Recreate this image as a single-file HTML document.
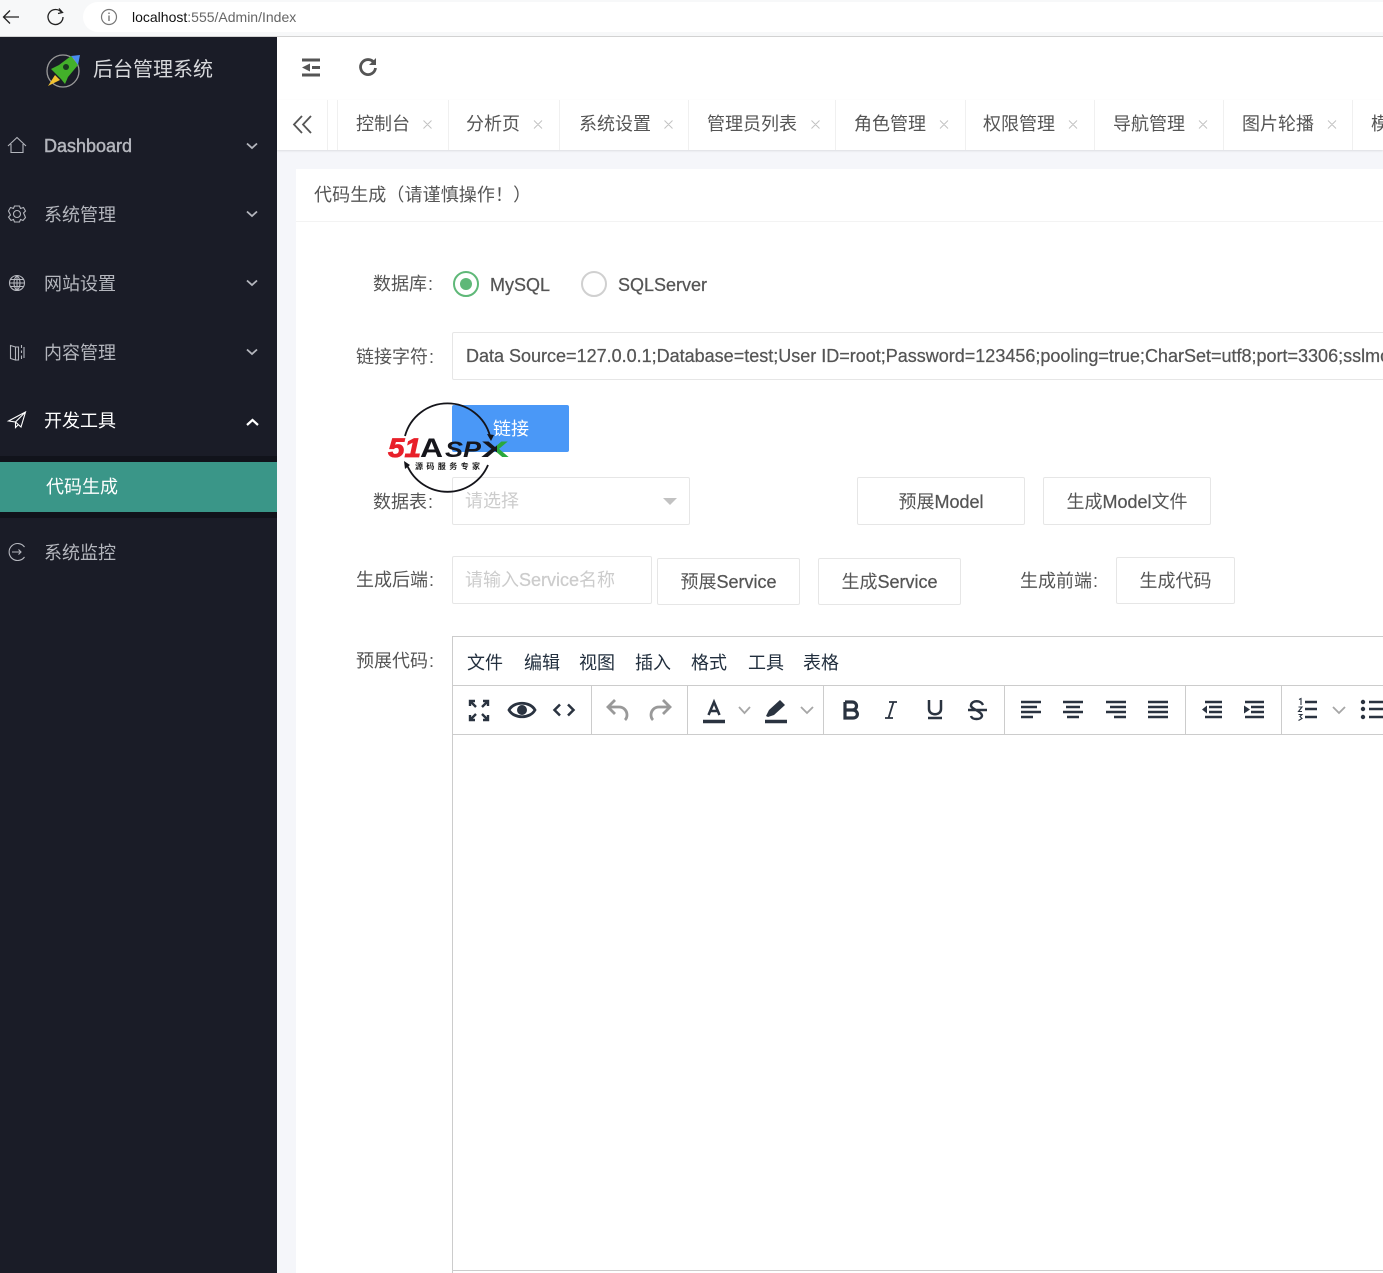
<!DOCTYPE html>
<html lang="zh"><head><meta charset="utf-8"><title>后台管理系统</title>
<style>
*{box-sizing:border-box}
html{overflow:hidden;height:1273px}
html,body{margin:0;padding:0}
body{width:1383px;height:1273px;position:relative;overflow:hidden;background:#f5f6fa;font-family:"Liberation Sans","Noto Sans CJK SC",sans-serif;color:#555;font-size:18px}
.a,.t,.b{position:absolute}
.t{white-space:nowrap;line-height:24px}
.b{background:#fff;border:1px solid #e6e6e6;border-radius:2px;text-align:center;white-space:nowrap;color:#555;font-size:18px}
.s{color:#b4b6bd}
.l{-webkit-text-stroke:.25px currentColor}
.c{margin-left:1px}
svg{position:absolute;overflow:visible;fill:none}
.sep{position:absolute;top:686px;width:1px;height:48px;background:#ccc}
</style></head><body>

<!-- browser bar -->
<div class="a" style="left:0;top:0;width:1383px;height:37px;background:#f7f8f9;border-bottom:1px solid #d2d2d2"></div>
<div class="a" style="left:83px;top:2px;width:1300px;height:30px;background:#fff;border-radius:15px 0 0 15px"></div>
<svg style="left:0;top:0" width="120" height="36"><path d="M19 17H4M10 10.500L3.500 17L10 23.500" stroke="#222" stroke-width="1.300"/><path d="M61.500 12.500A7.500 7.500 0 1 0 63 17" stroke="#222" stroke-width="1.300"/><path d="M59 8.500L62.500 12.500L58 13.500" stroke="#222" stroke-width="1.300"/><circle cx="109" cy="17" r="7.500" stroke="#777" stroke-width="1.200"/><path d="M109 15.500V21M109 12.500V14" stroke="#777" stroke-width="1.400"/></svg>
<div class="t" style="left:132px;top:5px;font-size:14px;color:#666"><span style="color:#111">localhost</span>:555/Admin/Index</div>

<!-- sidebar -->
<div class="a" style="left:0;top:37px;width:277px;height:1236px;background:#1a1c27"></div>
<svg style="left:46px;top:53px" width="36" height="36"><circle cx="17" cy="18" r="16" stroke="#9a9a9a" stroke-width="1.300"/><path d="M25 3L13 12L5 16L9 20L15 26L19 31L22 24L32 12Z" fill="#43b02a"/><path d="M34 2L25 3L28 6L30 9L32 12Z" fill="#4a8cf0"/><circle cx="20" cy="14" r="3" fill="#1a3a20"/><path d="M9 22L2 33L14 27Z" fill="#f2c230"/></svg>
<div class="t" style="left:93px;top:58px;font-size:20px;color:#d8d9dc">后台管理系统</div>

<div class="t s" style="left:44px;top:134px;-webkit-text-stroke:.45px #b4b6bd">Dashboard</div>
<div class="t s" style="left:44px;top:203px">系统管理</div>
<div class="t s" style="left:44px;top:272px">网站设置</div>
<div class="t s" style="left:44px;top:341px">内容管理</div>
<div class="t" style="left:44px;top:409px;color:#fff">开发工具</div>
<div class="a" style="left:0;top:456px;width:277px;height:62px;background:#11131b"></div>
<div class="a" style="left:0;top:462px;width:277px;height:50px;background:#3a9688"></div>
<div class="t" style="left:46px;top:475px;color:#fff">代码生成</div>
<div class="t s" style="left:44px;top:541px">系统监控</div>

<svg style="left:0;top:130px" width="277" height="440" stroke="#b4b6bd" stroke-width="1.100">
<path d="M8 16L17 7.500L26 16M11 14V22.500H23V14"/>
<path d="M247 13.500L252 18L257 13.500" stroke-width="1.800"/>
<circle cx="17" cy="84" r="3.500"/><path d="M14.500 76L19.500 76L20.500 78.500L23.500 77.500L25.500 81L23.500 83L24.500 85L25.500 87.500L23 90.500L20.500 89.500L19.500 92H14.500L13.500 89.500L11 90.500L8.500 87L10.500 85L8.500 81L10.500 77.500L13.500 78.500Z"/>
<path d="M247 81.500L252 86L257 81.500" stroke-width="1.800"/>
<circle cx="17" cy="153" r="7.500"/><path d="M9.500 153H24.500M10.500 149.500H23.500M10.500 156.500H23.500M17 145.500V160.500M17 145.500C13 149 13 157 17 160.500M17 145.500C21 149 21 157 17 160.500"/>
<path d="M247 150.500L252 155L257 150.500" stroke-width="1.800"/>
<path d="M10.500 215.500L15.500 217V230L10.500 228.500ZM15.500 217H18.500V230H15.500M21.500 215V218M21.500 220.500V223M21.500 225.500V229M24 217V228"/>
<path d="M247 219.500L252 224L257 219.500" stroke-width="1.800"/>
<path d="M8.500 291L25.500 282L21 297L15.500 292ZM25.500 282L15.500 292L15.500 297.500L18 295" stroke="#fff"/>
<path d="M247 295L252.500 290L258 295" stroke="#fff" stroke-width="2.200"/>
<path d="M24.500 417A8.500 8.500 0 1 0 24.500 427M12 422H21M18.500 419.500L21 422L18.500 424.500"/>
</svg>

<!-- header -->
<div class="a" style="left:277px;top:37px;width:1106px;height:63px;background:#fff"></div>
<svg style="left:277px;top:37px" width="120" height="63" stroke="#555"><path d="M25 23H43M35 30.500H43M25 38H43" stroke-width="3"/><path d="M33 26.500L25 30.500L33 34.500Z" fill="#555" stroke="none"/><path d="M97 25.500A7.500 7.500 0 1 0 98.500 31" stroke-width="2.800"/><path d="M99 21V28H92Z" fill="#555" stroke="none"/></svg>

<!-- tab bar -->
<div class="a" style="left:277px;top:100px;width:1106px;height:50px;background:#fff;box-shadow:0 1px 2px rgba(0,0,0,.1)"></div>
<svg style="left:277px;top:100px" width="1106" height="50" stroke="#f0f0f0"><path d="M50.500 0V50M60.500 0V50M171.500 0V50M282.500 0V50M411.500 0V50M558.500 0V50M688.500 0V50M817.500 0V50M946.500 0V50M1075.500 0V50"/><path d="M25 16L17 24.500L25 33M34 16L26 24.500L34 33" stroke="#555" stroke-width="1.800"/></svg>
<svg style="left:0;top:0" width="1383" height="150" stroke="#c2c2c2" stroke-width="1"><path d="M423.500 120.500L431.500 128.500M431.500 120.500L423.500 128.500M534 120.500L542 128.500M542 120.500L534 128.500M664.500 120.500L672.500 128.500M672.500 120.500L664.500 128.500M811.500 120.500L819.500 128.500M819.500 120.500L811.500 128.500M940 120.500L948 128.500M948 120.500L940 128.500M1069 120.500L1077 128.500M1077 120.500L1069 128.500M1199 120.500L1207 128.500M1207 120.500L1199 128.500M1328 120.500L1336 128.500M1336 120.500L1328 128.500"/></svg>
<div class="t" style="left:356px;top:112px">控制台</div>
<div class="t" style="left:466px;top:112px">分析页</div>
<div class="t" style="left:579px;top:112px">系统设置</div>
<div class="t" style="left:707px;top:112px">管理员列表</div>
<div class="t" style="left:854px;top:112px">角色管理</div>
<div class="t" style="left:983px;top:112px">权限管理</div>
<div class="t" style="left:1113px;top:112px">导航管理</div>
<div class="t" style="left:1242px;top:112px">图片轮播</div>
<div class="t" style="left:1371px;top:112px">模</div>

<!-- card -->
<div class="a" style="left:296px;top:169px;width:1087px;height:1104px;background:#fff"></div>
<div class="a" style="left:296px;top:221px;width:1087px;height:1px;background:#f3f3f3"></div>
<div class="t" style="left:314px;top:183px;letter-spacing:.1px">代码生成（请谨慎操作！）</div>

<div class="t" style="left:373px;top:272px">数据库<span class="c">:</span></div>
<div class="a" style="left:453px;top:271px;width:26px;height:26px;border:2px solid #5fb878;border-radius:50%"></div>
<div class="a" style="left:460px;top:278px;width:12px;height:12px;background:#5fb878;border-radius:50%"></div>
<div class="t l" style="left:490px;top:273px">MySQL</div>
<div class="a" style="left:581px;top:271px;width:26px;height:26px;border:2px solid #d0d0d0;border-radius:50%"></div>
<div class="t l" style="left:618px;top:273px">SQLServer</div>

<div class="t" style="left:356px;top:345px">链接字符<span class="c">:</span></div>
<div class="a" style="left:452px;top:332px;width:940px;height:48px;background:#fff;border:1px solid #e6e6e6;border-radius:2px"></div>
<div class="t l" style="left:466px;top:344px;width:917px;overflow:hidden">Data Source=127.0.0.1;Database=test;User ID=root;Password=123456;pooling=true;CharSet=utf8;port=3306;sslmode=none</div>

<div class="a" style="left:452px;top:405px;width:117px;height:47px;background:#4a98f7;border-radius:2px"></div>
<div class="t" style="left:493px;top:417px;color:#fff">链接</div>

<div class="t" style="left:373px;top:490px">数据表<span class="c">:</span></div>
<div class="a" style="left:452px;top:477px;width:238px;height:48px;background:#fff;border:1px solid #e6e6e6;border-radius:2px"></div>
<div class="t" style="left:465px;top:489px;color:#ccc">请选择</div>
<div class="a" style="left:663px;top:498px;width:0;height:0;border:7px solid transparent;border-top:7px solid #c2c2c2;border-bottom:0"></div>
<div class="b" style="left:857px;top:477px;width:168px;height:48px;line-height:48px">预展<span class="l">Model</span></div>
<div class="b" style="left:1043px;top:477px;width:168px;height:48px;line-height:48px">生成<span class="l">Model</span>文件</div>

<!-- watermark -->
<svg style="left:0;top:0" width="520" height="500">
<defs><clipPath id="k"><rect x="480" y="430" width="17" height="40"/></clipPath><clipPath id="g"><rect x="497" y="430" width="20" height="40"/></clipPath></defs>
<path d="M405 436A44 44 0 0 1 490 436" stroke="#14141a" stroke-width="1.800"/>
<path d="M407 465A44 44 0 0 0 488 465" stroke="#14141a" stroke-width="1.800"/>
<path d="M405 469L404 461L410 465ZM491 441L487 434L494 435Z" fill="#14141a"/>
<text x="388" y="457" font-family="Liberation Sans" font-size="27" font-weight="bold" font-style="italic" fill="#e8202a" stroke="#e8202a" stroke-width=".8" textLength="33" lengthAdjust="spacingAndGlyphs">51</text>
<text x="420" y="457" font-family="Liberation Sans" font-size="27" font-weight="bold" fill="#16161c" textLength="23" lengthAdjust="spacingAndGlyphs">A</text>
<text x="445" y="457" font-family="Liberation Sans" font-size="22" font-weight="bold" font-style="italic" fill="#16161c" textLength="36" lengthAdjust="spacingAndGlyphs">SP</text>
<text x="481" y="457" font-family="Liberation Sans" font-size="22" font-weight="bold" fill="#16161c" clip-path="url(#k)" textLength="28" lengthAdjust="spacingAndGlyphs">X</text>
<text x="481" y="457" font-family="Liberation Sans" font-size="22" font-weight="bold" fill="#2aa83c" clip-path="url(#g)" textLength="28" lengthAdjust="spacingAndGlyphs">X</text>
<text x="415" y="469" font-family="'Noto Sans CJK SC',sans-serif" font-size="8" font-weight="bold" fill="#222" textLength="65">源码服务专家</text></svg>

<div class="t" style="left:356px;top:568px">生成后端<span class="c">:</span></div>
<div class="a" style="left:452px;top:556px;width:200px;height:48px;background:#fff;border:1px solid #e6e6e6;border-radius:2px"></div>
<div class="t" style="left:465px;top:568px;color:#ccc">请输入<span class="l">Service</span>名称</div>
<div class="b" style="left:657px;top:558px;width:143px;height:47px;line-height:47px">预展<span class="l">Service</span></div>
<div class="b" style="left:818px;top:558px;width:143px;height:47px;line-height:47px">生成<span class="l">Service</span></div>
<div class="t" style="left:1020px;top:569px">生成前端<span class="c">:</span></div>
<div class="b" style="left:1116px;top:557px;width:119px;height:47px;line-height:47px">生成代码</div>

<div class="t" style="left:356px;top:649px">预展代码<span class="c">:</span></div>

<!-- editor -->
<div class="a" style="left:452px;top:636px;width:940px;height:637px;background:#fff;border:1px solid #ccc;border-bottom:0"></div>
<div class="a" style="left:453px;top:685px;width:930px;height:1px;background:#ccc"></div>
<div class="a" style="left:453px;top:734px;width:930px;height:1px;background:#ccc"></div>
<div class="a" style="left:453px;top:1270px;width:930px;height:1px;background:#ccc"></div>
<div class="t" style="left:467px;top:651px;color:#222f3e">文件</div>
<div class="t" style="left:524px;top:651px;color:#222f3e">编辑</div>
<div class="t" style="left:579px;top:651px;color:#222f3e">视图</div>
<div class="t" style="left:635px;top:651px;color:#222f3e">插入</div>
<div class="t" style="left:691px;top:651px;color:#222f3e">格式</div>
<div class="t" style="left:748px;top:651px;color:#222f3e">工具</div>
<div class="t" style="left:803px;top:651px;color:#222f3e">表格</div>
<div class="sep" style="left:591px"></div><div class="sep" style="left:687px"></div><div class="sep" style="left:823px"></div><div class="sep" style="left:1004px"></div><div class="sep" style="left:1185px"></div><div class="sep" style="left:1281px"></div>

<svg style="left:0;top:686px" width="1383" height="48" stroke="#2a3340" stroke-width="2.500">
<!-- fullscreen -->
<path d="M470 20V15H475M483 15H488V20M470 29V34H475M483 34H488V29M470 15L476 21M488 15L482 21M470 34L476 28M488 34L482 28" stroke-width="2.400"/>
<!-- eye -->
<path d="M509 24C514 15 530 15 535 24C530 33 514 33 509 24Z" stroke-width="2.800"/><circle cx="522" cy="24" r="5" fill="#2a3340" stroke="none"/>
<!-- code -->
<path d="M560 18.500L554.500 24L560 29.500M568 18.500L573.500 24L568 29.500" stroke-width="2.500"/>
<!-- undo redo -->
<path d="M615 14L608 21L615 28M608 21H619C624 21 627 25 627 29C627 31 626 33 625 34" stroke="#999" stroke-width="2.800"/>
<path d="M663 14L670 21L663 28M670 21H659C654 21 651 25 651 29C651 31 652 33 653 34" stroke="#999" stroke-width="2.800"/>
<!-- text colour -->
<path d="M708.500 29L714 16L719.500 29M710.500 25H717.500" stroke-width="2.500"/><path d="M703 35.500H725" stroke-width="3.500"/>
<path d="M739 21L744.500 27L750 21" stroke="#a6a6a6" stroke-width="1.800"/>
<!-- highlight -->
<path d="M766 30L769 24L780 14L785 19L774 29L768 31Z" fill="#2a3340" stroke="none"/><path d="M765 35.500H787" stroke-width="3.500"/>
<path d="M801 21L807 27L813 21" stroke="#a6a6a6" stroke-width="1.800"/>
<!-- B I U S -->
<path d="M845 16H852C858 16 858 24 852 24H845V32H853C859 32 859 24 852 24M845 16V32" stroke-width="3.200"/>
<path d="M889 16H897M885 32H893M893.500 16L888.500 32" stroke-width="1.800"/>
<path d="M929 14V23C929 30 941 30 941 23V14M928 32H942" stroke-width="2.500"/>
<path d="M968 24H987M983 19C981 14 972 14 971 19C970 23 982 25 982 30C981 34 972 34 971 30" stroke-width="2.400"/>
<!-- alignment -->
<path d="M1021 16H1041M1021 21H1037M1021 26H1041M1021 31H1033"/>
<path d="M1063 16H1083M1066 21H1080M1063 26H1083M1067 31H1079"/>
<path d="M1106 16H1126M1110 21H1126M1106 26H1126M1114 31H1126"/>
<path d="M1148 16H1168M1148 21H1168M1148 26H1168M1148 31H1168"/>
<!-- indent -->
<path d="M1205 16H1222M1209 21H1222M1209 26H1222M1205 31H1222"/><path d="M1207 19.500L1202 23.500L1207 27.500Z" fill="#2a3340" stroke="none"/>
<path d="M1245 16H1264M1245 31H1264M1251 21H1264M1251 26H1264"/><path d="M1244 19.500L1250 23.500L1244 27.500Z" fill="#2a3340" stroke="none"/>
<!-- lists -->
<path d="M1305 16H1317M1305 23H1317M1305 31H1317"/>
<path d="M1299 13.500L1301 12.500V19M1298.500 21H1302L1298.500 25.500H1302M1298.500 28.500H1302L1300 30.500L1302 32.500L1298.500 34.500" stroke-width="1.100"/>
<path d="M1333 21L1339 27L1345 21" stroke="#a6a6a6" stroke-width="1.800"/>
<path d="M1369 16H1383M1369 23H1383M1369 31H1383"/><circle cx="1363" cy="16" r="2.200" fill="#2a3340" stroke="none"/><circle cx="1363" cy="23" r="2.200" fill="#2a3340" stroke="none"/><circle cx="1363" cy="31" r="2.200" fill="#2a3340" stroke="none"/>
</svg>
</body></html>
